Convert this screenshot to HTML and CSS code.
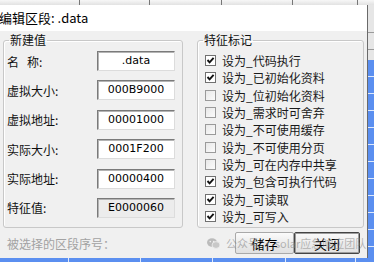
FILE: index.html
```html
<!DOCTYPE html>
<html lang="zh-CN">
<head>
<meta charset="UTF-8">
<title>编辑区段</title>
<link rel="stylesheet" href="styles.css">
</head>
<body>
	<div class="screen">
		<div class="topbar">
			<span style="width:80px"></span>
			<span style="width:70px"></span>
			<span style="width:72px"></span>
			<span style="width:71px"></span>
			<span style="width:65px"></span>
			<span class="close-x"></span>
		</div>
		<div class="main">
			<div class="dialog">
				<div class="title">编辑区段: .data</div>
				<div class="body">
					<div class="groups">
						<fieldset class="group values">
							<legend>新建值</legend>
							<div class="field"><label><span class="sp">名</span>称:</label><div class="box">.data</div></div>
							<div class="field"><label>虚拟大小:</label><div class="box">000B9000</div></div>
							<div class="field"><label>虚拟地址:</label><div class="box">00001000</div></div>
							<div class="field"><label>实际大小:</label><div class="box">0001F200</div></div>
							<div class="field"><label>实际地址:</label><div class="box">00000400</div></div>
							<div class="field"><label>特征值:</label><div class="box readonly">E0000060</div></div>
						</fieldset>
						<fieldset class="group flags">
							<legend>特征标记</legend>
							<div class="check on"><i></i>设为_代码执行</div>
							<div class="check on"><i></i>设为_已初始化资料</div>
							<div class="check"><i></i>设为_位初始化资料</div>
							<div class="check"><i></i>设为_需求时可舍弃</div>
							<div class="check"><i></i>设为_不可使用缓存</div>
							<div class="check"><i></i>设为_不可使用分页</div>
							<div class="check"><i></i>设为_可在内存中共享</div>
							<div class="check on"><i></i>设为_包含可执行代码</div>
							<div class="check on"><i></i>设为_可读取</div>
							<div class="check on"><i></i>设为_可写入</div>
						</fieldset>
					</div>
					<div class="footer">
						<span class="selected">被选择的区段序号：</span>
						<button class="btn save">储存</button>
						<button class="btn close default">关闭</button>
						<div class="mark">
							<svg width="13" height="11" viewBox="0 0 13 11">
								<ellipse cx="5" cy="4.5" rx="5" ry="4.2" fill="#bbb"/>
								<ellipse cx="9" cy="7" rx="4" ry="3.4" fill="#c8c8c8" stroke="#f0f0f0" stroke-width="0.8"/>
								<circle cx="3.3" cy="3.6" r="0.8" fill="#f0f0f0"/>
								<circle cx="6.7" cy="3.6" r="0.8" fill="#f0f0f0"/>
							</svg>
							<span>公众号 · solar应急响应团队</span>
						</div>
					</div>
				</div>
			</div>
			<div class="side">
				<div class="side-top"></div>
				<div class="side-list"></div>
			</div>
		</div>
		<div class="bottombar"></div>
	</div>
</body>
</html>
```

FILE: styles.css
```css
* {
	box-sizing: border-box;
}
body {
	margin: 0;
	width: 374px;
	height: 262px;
	overflow: hidden;
	font-family: "Noto Sans CJK SC", sans-serif;
	font-size: 12px;
	color: #111;
	background: #f0f0f0;
}
.screen {
	display: flex;
	flex-direction: column;
	width: 374px;
	height: 262px;
}
.topbar {
	display: flex;
	height: 5px;
	background: #ececec;
}
.topbar span {
	height: 5px;
	border-right: 1px solid #777;
	background: linear-gradient(#f7f7f7, #e2e2e2);
}
.topbar .close-x {
	flex: 1;
	border-right: 0;
}
.main {
	display: flex;
	height: 253px;
}
.dialog {
	display: flex;
	flex-direction: column;
	width: 368px;
	border-right: 1px solid #6a6a6a;
	background: #f0f0f0;
}
.title {
	height: 26px;
	margin-left: -1px;
	line-height: 26px;
	font-size: 13px;
	white-space: nowrap;
	color: #000;
	background: #fff;
}
.body {
	flex: 1;
	display: flex;
	flex-direction: column;
	padding: 2px 3px 0 3px;
}
.groups {
	display: flex;
	gap: 14px;
}
.group {
	margin: 0;
	height: 195px;
	padding: 4px 3px 0;
	border: 1px solid #c8c8c8;
	border-radius: 3px;
	box-shadow: inset 1px 1px 0 #fff;
}
.group legend {
	margin-left: 2px;
	padding: 0 1px;
	line-height: 14px;
	font-size: 12px;
	color: #111;
}
.values {
	width: 180px;
	display: flex;
	flex-direction: column;
	gap: 9.4px;
}
.flags {
	width: 167px;
	padding-top: 5px;
}
.field {
	display: flex;
	align-items: center;
	height: 20px;
}
.field label {
	width: 90px;
	font-size: 12px;
	color: #111;
}
.field .sp {
	margin-right: 8px;
}
.box {
	width: 78px;
	height: 20px;
	line-height: 17px;
	text-align: center;
	font-family: "DejaVu Sans", sans-serif;
	font-size: 11px;
	color: #000;
	background: #fff;
	border: 1px solid;
	border-color: #7a7a7a #dcdcdc #dcdcdc #7a7a7a;
	box-shadow: inset 1px 1px 0 #b4b4b4;
}
.box.readonly {
	background: #ececec;
}
.check {
	display: flex;
	align-items: center;
	height: 17.33px;
	padding-left: 4px;
	font-size: 12px;
	color: #1a1a1a;
	white-space: nowrap;
}
.check i {
	width: 11px;
	height: 11px;
	margin-right: 6px;
	border: 1px solid #9a9a9a;
	background: linear-gradient(135deg, #e8e8e8, #fbfbfb);
}
.check.on i {
	border-color: #707070;
	background: #fff url("data:image/svg+xml,%3Csvg xmlns='http://www.w3.org/2000/svg' width='9' height='9'%3E%3Cpath d='M1.5 4 L3.6 6.3 L7.6 1.8' fill='none' stroke='%23111' stroke-width='1.9'/%3E%3C/svg%3E") center no-repeat;
}
.footer {
	position: relative;
	flex: 1;
	display: flex;
	align-items: center;
	padding: 0 4px 0 4px;
}
.selected {
	color: #a2a2a2;
	font-size: 12px;
}
.btn {
	height: 22px;
	padding: 0;
	font-family: "Noto Sans CJK SC", sans-serif;
	font-size: 13px;
	color: #000;
	border: 1px solid #a9a9a9;
	border-radius: 2px;
	background: linear-gradient(#fbfbfb, #ececec 50%, #e0e0e0);
}
.btn.save {
	width: 59px;
	margin-left: auto;
}
.btn.close {
	width: 66px;
}
.btn.default {
	border-color: #444;
	box-shadow: inset 0 0 0 1px #9d9d9d;
}
.mark {
	position: absolute;
	left: 204px;
	top: 8px;
	display: flex;
	align-items: center;
	gap: 6px;
	font-size: 11px;
	line-height: 14px;
	white-space: nowrap;
	color: rgba(130, 130, 130, 0.55);
	pointer-events: none;
}
.side {
	flex: 1;
	display: flex;
	flex-direction: column;
}
.side-top {
	height: 55px;
	background: linear-gradient(#e6e6e6 0 27px, #9a9a9a 27px 28px, #e6e6e6 28px 44px, #9a9a9a 44px 45px, #e6e6e6 45px);
}
.side-list {
	flex: 1;
	background: repeating-linear-gradient(#5b8ff0 0 16px, #dfe9fb 16px 17px);
}
.bottombar {
	height: 4px;
	background: linear-gradient(90deg, #5b8ff0 0 68px, #dfe9fb 68px 69px, #5b8ff0 69px 140px, #dfe9fb 140px 141px, #5b8ff0 141px 212px, #dfe9fb 212px 213px, #5b8ff0 213px 285px, #dfe9fb 285px 286px, #5b8ff0 286px 355px, #dfe9fb 355px 356px, #5b8ff0 356px);
}
```
